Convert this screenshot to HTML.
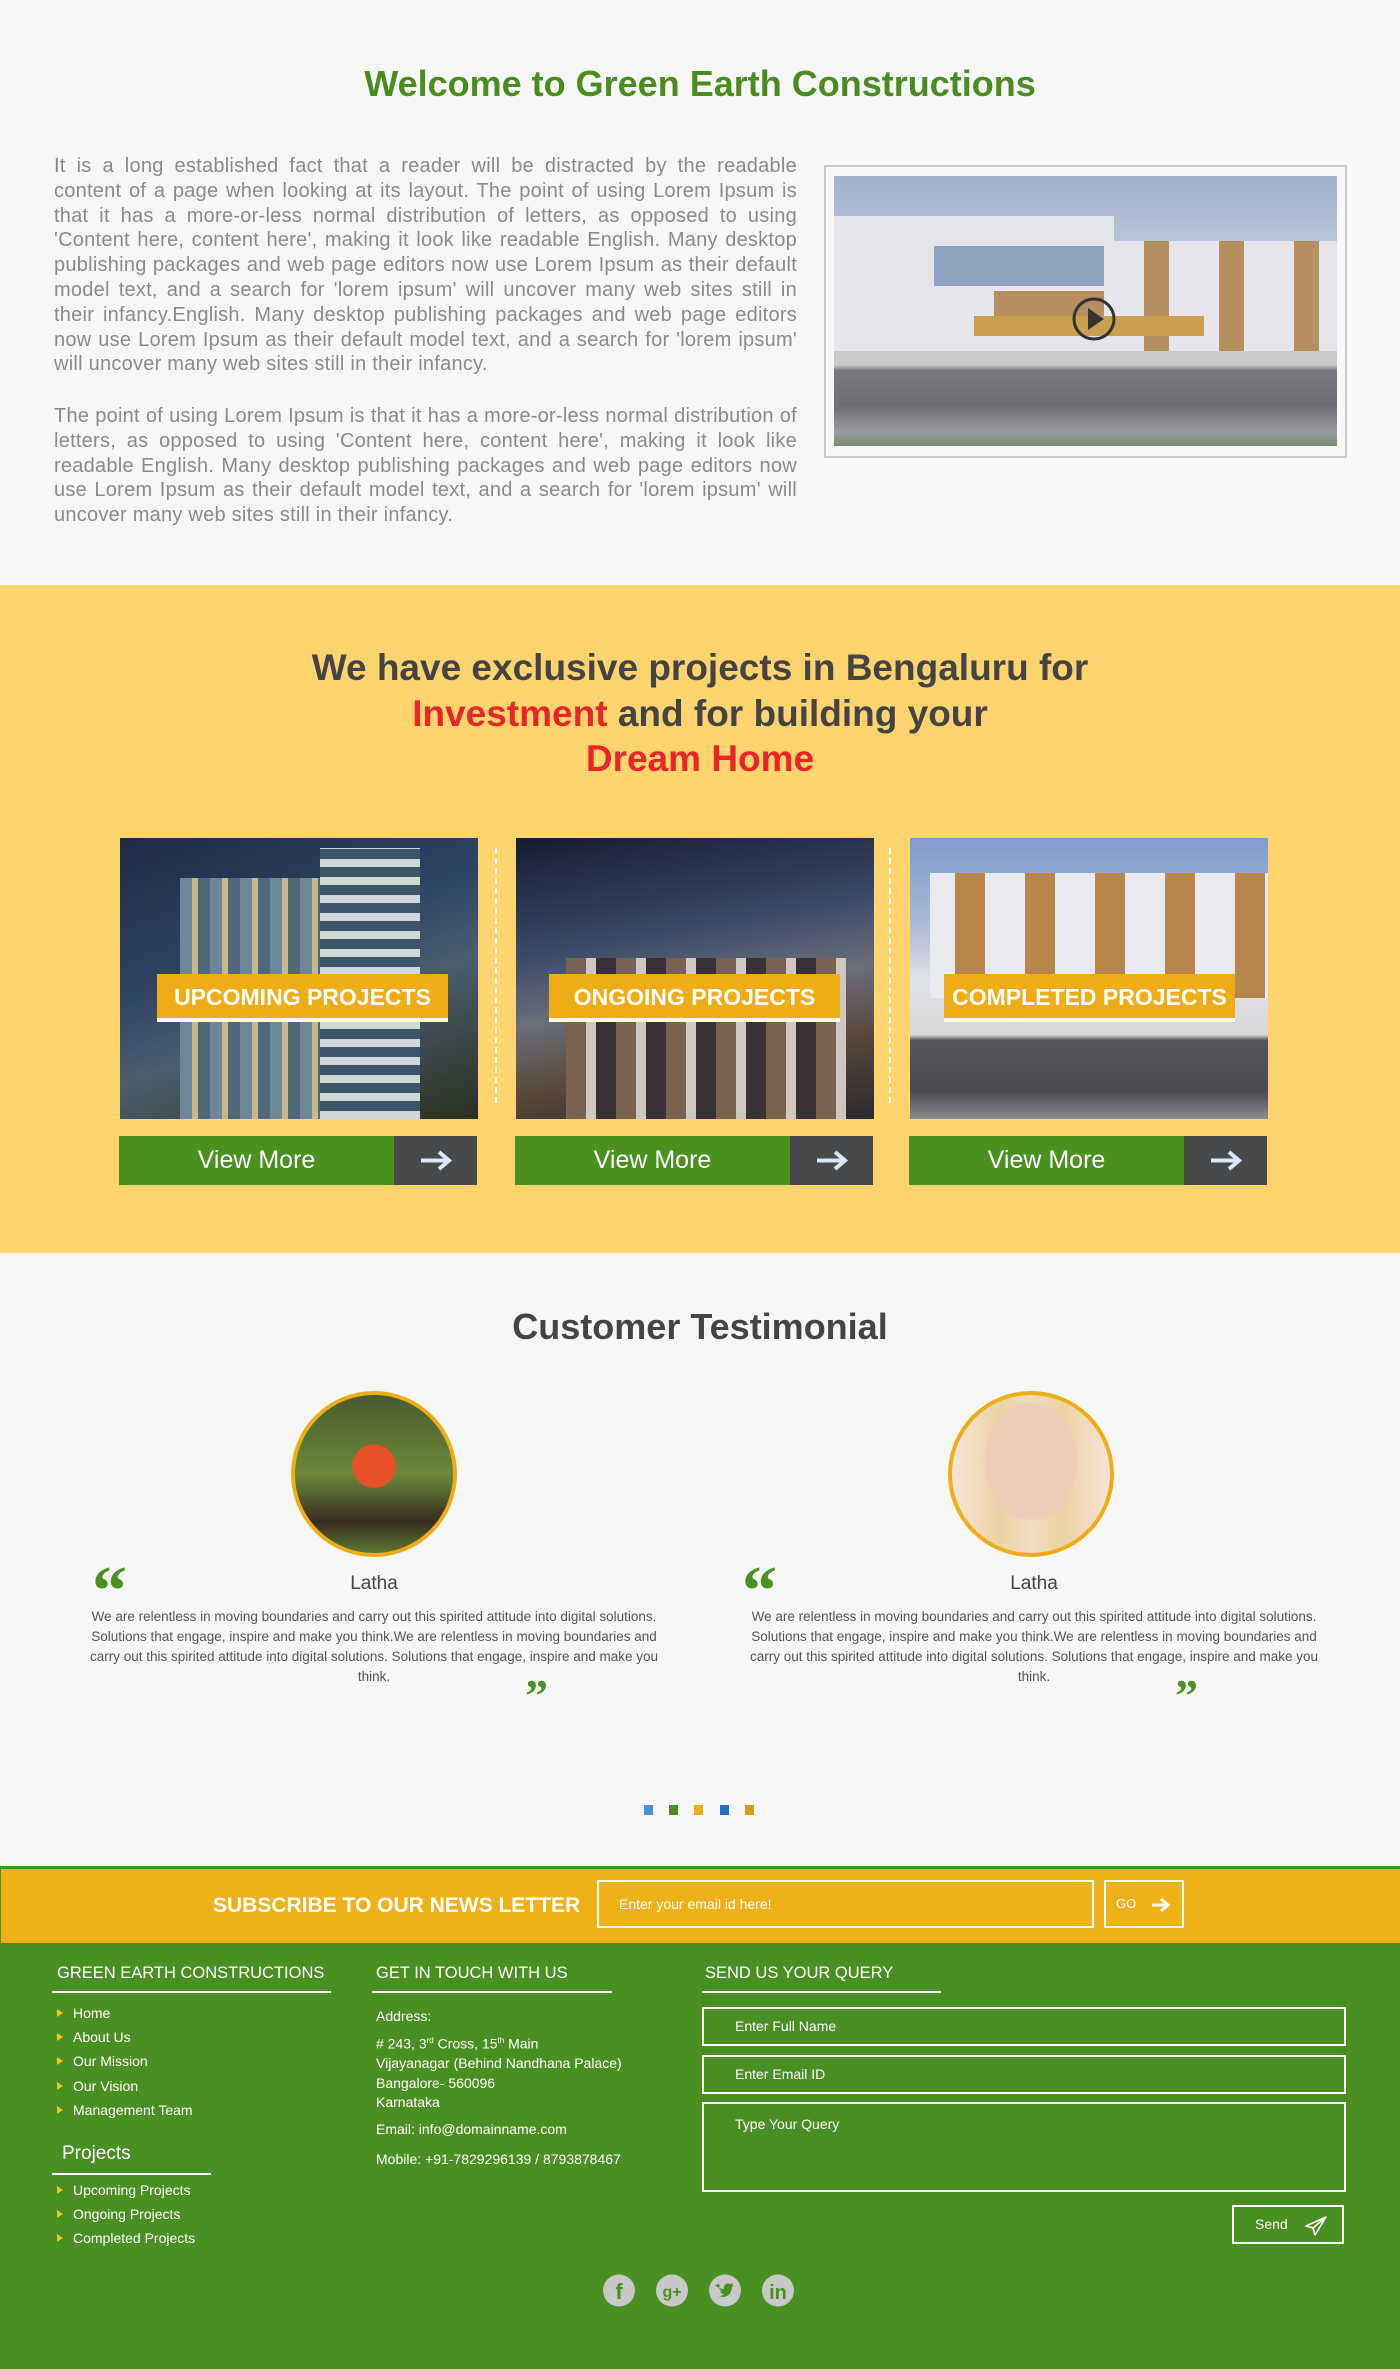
<!DOCTYPE html>
<html><head><meta charset="utf-8">
<style>
*{margin:0;padding:0;box-sizing:border-box}
body{width:1400px;height:2369px;position:relative;background:#f7f7f7;font-family:"Liberation Sans",sans-serif;overflow:hidden}
.a{position:absolute}
.c{text-align:center}
.p{color:#8a8a8a;font-size:20px;line-height:24.8px;text-align:justify;letter-spacing:0.25px}
.card{position:absolute;top:838px;width:358px;height:281px;overflow:hidden}
.lbl{position:absolute;top:136px;height:48px;background:#efad15;color:#fff;font-weight:bold;font-size:23px;text-align:center;line-height:46px;border-bottom:4px solid #fff}
.btn{position:absolute;top:1136px;width:358px;height:49px}
.btn .g{position:absolute;left:0;top:0;width:275px;height:49px;background:#4a9120;color:#fff;font-size:25px;text-align:center;line-height:49px}
.btn .d{position:absolute;left:275px;top:0;width:83px;height:49px;background:#48494a}
.sep{position:absolute;top:848px;height:255px;border-left:2px dashed #fff}
.q{color:#4a9120;font-family:"Liberation Serif",serif;font-weight:bold;font-size:70px;line-height:60px}
.tt{color:#555;font-size:13.5px;line-height:20px;text-align:center;width:590px}
.f{color:#fff;font-size:14px}
.fh{color:#fff;font-size:16.5px}
.ul{position:absolute;height:2px;background:#fff}
.li{position:absolute;left:57px;color:#fff;font-size:14px}
.li:before{content:"";display:inline-block;border-left:6px solid #f5c518;border-top:4px solid transparent;border-bottom:4px solid transparent;margin-right:10px;vertical-align:1px}
.in{position:absolute;left:702px;width:644px;border:2px solid #fff;color:#fff;font-size:14px;padding-left:31px}
</style></head><body>

<div class="a c" style="left:0;top:63px;width:1400px;color:#4a8c1f;font-size:36px;font-weight:bold">Welcome to Green Earth Constructions</div>

<div class="a p" style="left:54px;top:154px;width:743px">It is a long established fact that a reader will be distracted by the readable content of a page when looking at its layout. The point of using Lorem Ipsum is that it has a more-or-less normal distribution of letters, as opposed to using 'Content here, content here', making it look like readable English. Many desktop publishing packages and web page editors now use Lorem Ipsum as their default model text, and a search for 'lorem ipsum' will uncover many web sites still in their infancy.English. Many desktop publishing packages and web page editors now use Lorem Ipsum as their default model text, and a search for 'lorem ipsum' will uncover many web sites still in their infancy.</div>
<div class="a p" style="left:54px;top:404px;width:743px">The point of using Lorem Ipsum is that it has a more-or-less normal distribution of letters, as opposed to using 'Content here, content here', making it look like readable English. Many desktop publishing packages and web page editors now use Lorem Ipsum as their default model text, and a search for 'lorem ipsum' will uncover many web sites still in their infancy.</div>

<div class="a" style="left:824px;top:165px;width:523px;height:293px;border:2px solid #c8c8c8;background:#f7f7f7"></div>
<div class="a" style="left:834px;top:176px;width:503px;height:270px;overflow:hidden;background:linear-gradient(#9fb0cc 0%,#b9c5d9 25%,#c9ccd2 40%,#d0d0d2 55%,#c8c8c8 70%,#787a80 72%,#6c6e74 85%,#9c9ea2 95%,#7a8a6e 100%)">
 <div class="a" style="left:0;top:40px;width:280px;height:135px;background:#e4e6ec"></div>
 <div class="a" style="left:100px;top:70px;width:170px;height:40px;background:#8fa3c0"></div>
 <div class="a" style="left:160px;top:115px;width:110px;height:35px;background:#b58f60"></div>
 <div class="a" style="left:280px;top:65px;width:223px;height:110px;background:repeating-linear-gradient(90deg,#e6e6ea 0 30px,#b58f60 30px 55px,#e6e6ea 55px 75px)"></div>
 <div class="a" style="left:140px;top:140px;width:230px;height:20px;background:#c8a050"></div>
 <svg class="a" style="left:237px;top:120px" width="46" height="46"><circle cx="23" cy="23" r="20" fill="none" stroke="#333" stroke-width="3"/><path d="M17 12 L33 23 L17 34Z" fill="#333"/></svg>
</div>

<div class="a" style="left:0;top:585px;width:1400px;height:668px;background:#ffd36e"></div>
<div class="a c" style="left:0;top:645px;width:1400px;color:#444;font-size:37px;font-weight:bold;line-height:45.5px">We have exclusive projects in Bengaluru for<br><span style="color:#e8262a">Investment</span> and for building your<br><span style="color:#e8262a">Dream Home</span></div>

<div class="card" style="left:120px;background:linear-gradient(160deg,#1d2a45 0%,#2f4566 40%,#4a5e6e 60%,#2a3020 100%)">
 <div class="a" style="left:60px;top:40px;width:240px;height:241px;background:repeating-linear-gradient(90deg,#6f8598 0 12px,#c9b98a 12px 18px,#51687a 18px 30px)"></div>
 <div class="a" style="left:200px;top:10px;width:100px;height:271px;background:repeating-linear-gradient(0deg,#cfd8d8 0 8px,#3e5468 8px 18px)"></div>
 <div class="lbl" style="left:37px;width:291px">UPCOMING PROJECTS</div>
</div>
<div class="sep" style="left:495px"></div>
<div class="card" style="left:516px;background:linear-gradient(170deg,#141c30 0%,#3a4a6a 35%,#6a6e7a 55%,#5a4838 75%,#2a2a30 100%)">
 <div class="a" style="left:50px;top:120px;width:280px;height:161px;background:repeating-linear-gradient(90deg,#7a6250 0 20px,#d0c8c0 20px 30px,#3a3036 30px 50px)"></div>
 <div class="lbl" style="left:33px;width:291px">ONGOING PROJECTS</div>
</div>
<div class="sep" style="left:889px"></div>
<div class="card" style="left:910px;background:linear-gradient(#7f9ccc 0%,#a7b8d5 30%,#dfe2e8 50%,#d8d8d8 70%,#55565c 72%,#4a4b50 90%,#8a8c8e 100%)">
 <div class="a" style="left:20px;top:35px;width:338px;height:125px;background:repeating-linear-gradient(90deg,#e8eaee 0 25px,#b8864a 25px 55px,#e8eaee 55px 70px)"></div>
 <div class="lbl" style="left:34px;width:291px">COMPLETED PROJECTS</div>
</div>

<div class="btn" style="left:119px"><div class="g">View More</div><div class="d"><svg width="83" height="49"><path d="M27 24.5H54M45 16L55 24.5L45 33" stroke="#dde8f6" stroke-width="4" fill="none"/></svg></div></div>
<div class="btn" style="left:515px"><div class="g">View More</div><div class="d"><svg width="83" height="49"><path d="M27 24.5H54M45 16L55 24.5L45 33" stroke="#dde8f6" stroke-width="4" fill="none"/></svg></div></div>
<div class="btn" style="left:909px"><div class="g">View More</div><div class="d"><svg width="83" height="49"><path d="M27 24.5H54M45 16L55 24.5L45 33" stroke="#dde8f6" stroke-width="4" fill="none"/></svg></div></div>

<div class="a c" style="left:0;top:1306px;width:1400px;color:#444;font-size:36px;font-weight:bold">Customer Testimonial</div>

<div class="a" style="left:291px;top:1391px;width:166px;height:166px;border-radius:50%;border:4px solid #efad15;overflow:hidden;background:radial-gradient(circle at 50% 45%,#e8502a 0 18%,transparent 19%),linear-gradient(#4a5a30,#6a8a3a 50%,#3a2a20 80%,#5a7a30)"></div>
<div class="a" style="left:948px;top:1391px;width:166px;height:166px;border-radius:50%;border:4px solid #efad15;overflow:hidden;background:radial-gradient(ellipse 30% 38% at 50% 42%,#f0cdb8 0 95%,transparent 100%),linear-gradient(90deg,#f6e4d8,#ecd3a4 30%,#f2dcc0 50%,#ecd3a4 70%,#f6e4d8)"></div>

<div class="a q" style="left:92px;top:1562px">&ldquo;</div>
<div class="a q" style="left:742px;top:1562px">&ldquo;</div>
<div class="a c" style="left:274px;top:1573px;width:200px;color:#444;font-size:19px">Latha</div>
<div class="a c" style="left:934px;top:1573px;width:200px;color:#444;font-size:19px">Latha</div>
<div class="a tt" style="left:79px;top:1607px">We are relentless in moving boundaries and carry out this spirited attitude into digital solutions. Solutions that engage, inspire and make you think.We are relentless in moving boundaries and carry out this spirited attitude into digital solutions. Solutions that engage, inspire and make you think.</div>
<div class="a tt" style="left:739px;top:1607px">We are relentless in moving boundaries and carry out this spirited attitude into digital solutions. Solutions that engage, inspire and make you think.We are relentless in moving boundaries and carry out this spirited attitude into digital solutions. Solutions that engage, inspire and make you think.</div>
<div class="a q" style="left:525px;top:1676px;font-size:46px;line-height:40px">&rdquo;</div>
<div class="a q" style="left:1175px;top:1676px;font-size:46px;line-height:40px">&rdquo;</div>

<div class="a" style="left:644px;top:1805px;width:9px;height:10px;background:#4a90d9"></div>
<div class="a" style="left:669px;top:1805px;width:9px;height:10px;background:#4a8c1f"></div>
<div class="a" style="left:694px;top:1805px;width:9px;height:10px;background:#efad15"></div>
<div class="a" style="left:720px;top:1805px;width:9px;height:10px;background:#1f6fc5"></div>
<div class="a" style="left:745px;top:1805px;width:9px;height:10px;background:#d99a1a"></div>

<div class="a" style="left:0;top:1866px;width:1400px;height:503px;background:#4a8f22"></div>
<div class="a" style="left:1px;top:1869px;width:1399px;height:74px;background:#efb118"></div>
<div class="a" style="left:213px;top:1894px;color:#fff;font-size:21px;font-weight:bold">SUBSCRIBE TO OUR NEWS LETTER</div>
<div class="a" style="left:597px;top:1880px;width:497px;height:48px;border:2px solid #fff;color:#fff;font-size:14px;line-height:44px;padding-left:20px">Enter your email id here!</div>
<div class="a" style="left:1104px;top:1880px;width:80px;height:48px;border:2px solid #fff;color:#fff;font-size:13px;line-height:44px;padding-left:10px">GO<svg style="position:absolute;left:45px;top:14px" width="20" height="18"><path d="M1 9H16M10 3L17 9L10 15" stroke="#fff" stroke-width="3" fill="none"/></svg></div>

<div class="a fh" style="left:57px;top:1964px">GREEN EARTH CONSTRUCTIONS</div>
<div class="ul" style="left:52px;top:1991px;width:279px"></div>
<div class="li" style="top:2005px">Home</div>
<div class="li" style="top:2029px">About Us</div>
<div class="li" style="top:2053px">Our Mission</div>
<div class="li" style="top:2078px">Our Vision</div>
<div class="li" style="top:2102px">Management Team</div>
<div class="a" style="left:62px;top:2143px;color:#fff;font-size:19px">Projects</div>
<div class="ul" style="left:52px;top:2173px;width:159px"></div>
<div class="li" style="top:2182px">Upcoming Projects</div>
<div class="li" style="top:2206px">Ongoing Projects</div>
<div class="li" style="top:2230px">Completed Projects</div>

<div class="a fh" style="left:376px;top:1964px">GET IN TOUCH WITH US</div>
<div class="ul" style="left:372px;top:1991px;width:240px"></div>
<div class="a f" style="left:376px;top:2007px;line-height:19.5px">Address:</div>
<div class="a f" style="left:376px;top:2031px;line-height:19.5px"># 243, 3<sup style="font-size:8px">rd</sup> Cross, 15<sup style="font-size:8px">th</sup> Main<br>Vijayanagar (Behind Nandhana Palace)<br>Bangalore- 560096<br>Karnataka</div>
<div class="a f" style="left:376px;top:2121px">Email: info@domainname.com</div>
<div class="a f" style="left:376px;top:2151px">Mobile: +91-7829296139 / 8793878467</div>

<div class="a fh" style="left:705px;top:1964px">SEND US YOUR QUERY</div>
<div class="ul" style="left:702px;top:1991px;width:239px"></div>
<div class="in" style="top:2007px;height:39px;line-height:35px">Enter Full Name</div>
<div class="in" style="top:2055px;height:39px;line-height:35px">Enter Email ID</div>
<div class="in" style="top:2102px;height:90px;padding-top:12px">Type Your Query</div>
<div class="a" style="left:1232px;top:2205px;width:112px;height:39px;border:2px solid #fff;color:#fff;font-size:14px;line-height:35px;padding-left:21px">Send<svg style="position:absolute;left:70px;top:8px" width="24" height="22"><path d="M22 2L2 11L9 13ZM22 2L11 20L9 13Z" stroke="#fff" stroke-width="1.6" fill="none" stroke-linejoin="round"/></svg></div>

<svg class="a" style="left:600px;top:2272px" width="200" height="40">
<g fill="#c8c8c8"><circle cx="19" cy="18.5" r="16"/><circle cx="72" cy="18.5" r="16"/><circle cx="125" cy="18.5" r="16"/><circle cx="178" cy="18.5" r="16"/></g>
<g fill="#4a8f22" font-family="Liberation Sans,sans-serif" font-weight="bold">
<text x="19" y="27" font-size="22" text-anchor="middle">f</text>
<text x="72" y="25" font-size="16" text-anchor="middle">g+</text>
<text x="178" y="27" font-size="20" text-anchor="middle">in</text>
</g>
<path d="M115 13c3 3 6 4 9 4c-1-4 3-7 6-5c1 0 2-1 3-1l-1 2l2 0l-2 2c0 7-6 12-13 9c3 0 4-1 5-2c-2 0-3-1-4-3l2 0c-2-1-3-2-3-4l2 1c-2-1-2-3-1-4z" fill="#4a8f22"/>
</svg>
</body></html>
